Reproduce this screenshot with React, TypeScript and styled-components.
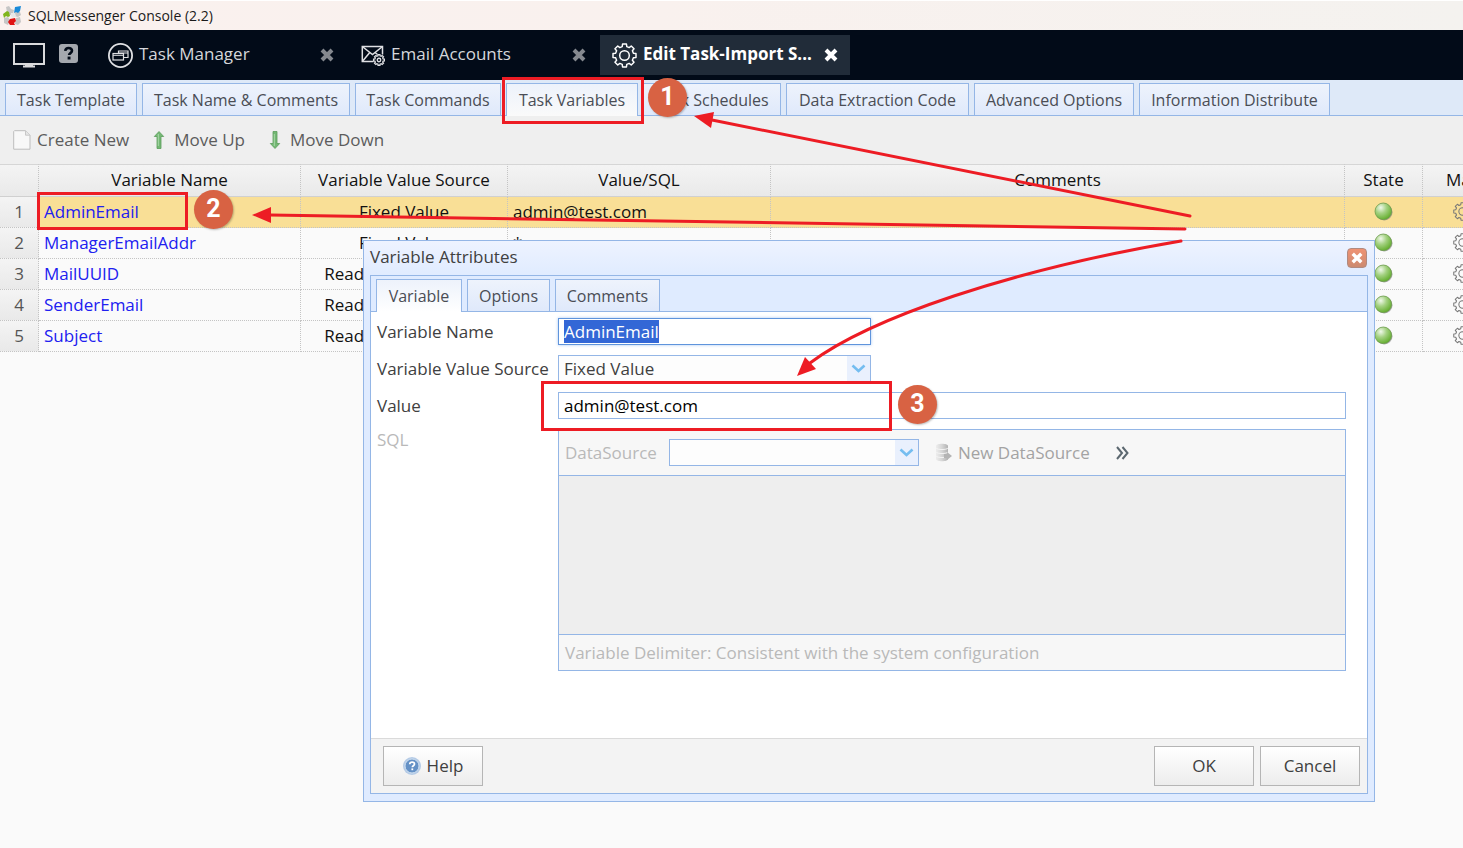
import React, { useEffect, useRef } from "react";
import styled, { createGlobalStyle, css } from "styled-components";

const line = "#94b6e6";
const red = "#ed1c24";

const GlobalStyle = createGlobalStyle`
  *, *::before, *::after { box-sizing: border-box; }
  html, body, #root { height: 100%; }
  body {
    margin: 0;
    background: #fafafa;
    color: #404040;
    font-family: "Open Sans", "Noto Sans", sans-serif;
    font-size: 17px;
    line-height: 24px;
    overflow: hidden;
  }
  button, input, select, textarea { font: inherit; color: inherit; }
  button { cursor: pointer; }
`;

const Page = styled.div`
  position: relative;
  display: flex;
  flex-direction: column;
  min-height: 100%;
  overflow: hidden;
`;

/* ---------- window chrome ---------- */

const TitleBar = styled.header`
  display: flex;
  align-items: center;
  gap: 6px;
  height: 30px;
  padding-left: 3px;
  border-top: 1px solid #fff;
  background: linear-gradient(90deg, #faf1ee, #f9f1ee 45%, #f4f2ef);
  color: #1a1a1a;
  font-size: 14px;
`;

const AppBar = styled.nav`
  display: flex;
  align-items: center;
  gap: 2px;
  height: 50px;
  background: #020b18;
  color: #d8dade;
`;

const Launchers = styled.div`
  display: flex;
  align-items: center;
  gap: 14px;
  width: 94px;
  padding-left: 13px;
`;

const IconButton = styled.button`
  display: flex;
  padding: 0;
  border: 0;
  background: none;
`;

const AppTab = styled.div<{ $active?: boolean }>`
  display: flex;
  align-items: center;
  gap: 6px;
  width: 250px;
  height: 40px;
  padding: 0 12px;
  background: ${(p) => (p.$active ? "#212c39" : "transparent")};
  color: ${(p) => (p.$active ? "#fff" : "#d5d7db")};
  font-weight: ${(p) => (p.$active ? 700 : 400)};
`;

const AppTabLink = styled.a`
  flex: 1;
  padding-bottom: 2px;
  color: inherit;
  text-decoration: none;
  white-space: nowrap;
`;

/* ---------- section tabs ---------- */

const TabStrip = styled.div<{ $inset?: boolean }>`
  display: flex;
  align-items: flex-end;
  gap: 5px;
  height: 36px;
  padding-left: 5px;
  border-bottom: 1px solid ${line};
  background: ${(p) => (p.$inset ? "#dfebff" : "#dee9f8")};
`;

const Tab = styled.button<{ $w: number; $active?: boolean; $fill?: string }>`
  width: ${(p) => p.$w}px;
  height: 32px;
  padding: 0;
  border: 1px solid ${line};
  border-bottom: 0;
  background: linear-gradient(#eef3fc, #dfe9fb);
  color: #4a4d55;
  font-size: 16px;
  white-space: nowrap;
  ${(p) =>
    p.$active &&
    css`
      height: 33px;
      margin-bottom: -1px;
      background: linear-gradient(#edf2fb, ${p.$fill});
    `}
`;

/* ---------- toolbar ---------- */

const Toolbar = styled.div`
  display: flex;
  align-items: center;
  gap: 21px;
  height: 48px;
  padding-left: 13px;
  background: #efefef;
`;

const ToolButton = styled.button<{ $disabled?: boolean }>`
  display: flex;
  align-items: center;
  gap: 6px;
  padding: 0;
  border: 0;
  background: none;
  color: ${(p) => (p.$disabled ? "#a3a3a3" : "#5c5c5c")};
`;

/* ---------- variables grid ---------- */

const GridFrame = styled.main`
  overflow: hidden;
`;

const Grid = styled.table`
  width: calc(100% + 40px);
  table-layout: fixed;
  border-collapse: separate;
  border-spacing: 0;
  color: #111;
`;

const HeadCell = styled.th<{ $left?: boolean }>`
  height: 33px;
  padding: 0 6px 2px ${(p) => (p.$left ? "23px" : "6px")};
  border-top: 1px solid #d6d6d6;
  border-bottom: 1px solid #d0d0d0;
  border-right: 1px dotted #c4c4c4;
  background: linear-gradient(#f4f4f4, #e9e9e9);
  font-weight: 400;
  text-align: ${(p) => (p.$left ? "left" : "center")};
  white-space: nowrap;
  overflow: hidden;
`;

const Row = styled.tr<{ $selected?: boolean }>`
  background: ${(p) => (p.$selected ? "#f9df96" : "#fafafa")};
`;

const Cell = styled.td<{ $align?: string }>`
  height: 31px;
  padding: 0 5px 1px;
  border-right: 1px dotted #c4c4c4;
  border-bottom: 1px dotted #c4c4c4;
  text-align: ${(p) => p.$align ?? "left"};
  line-height: 20px;
  white-space: nowrap;
  svg { display: block; margin: 0 auto; }
`;

const NumberCell = styled(Cell)`
  padding: 0;
  background: linear-gradient(#f4f4f4, #e9e9e9);
  color: #555;
`;

const VariableLink = styled.a`
  color: #2020f0;
  text-decoration: none;
`;

/* ---------- dialog ---------- */

const Dialog = styled.section`
  position: absolute;
  top: 240px;
  left: 363px;
  right: 88px;
  display: flex;
  flex-direction: column;
  padding: 0 6px 7px;
  border: 1px solid ${line};
  background: linear-gradient(#eef3ff, #dfebff 36px);
`;

const DialogHeader = styled.div`
  display: flex;
  align-items: center;
  justify-content: space-between;
  height: 34px;
`;

const DialogTitle = styled.h2`
  margin: 0;
  padding-bottom: 2px;
  font-size: 17px;
  font-weight: 400;
`;

const CloseButton = styled.button`
  display: flex;
  align-items: center;
  justify-content: center;
  width: 20px;
  height: 20px;
  margin-right: 1px;
  padding: 0;
  border: 1px solid #b08a80;
  border-radius: 4px;
  background: linear-gradient(#ef9273, #cc8a70);
`;

const DialogBody = styled.div`
  border: 1px solid ${line};
  background: #fff;
`;

const Form = styled.form`
  display: grid;
  grid-template-columns: 181px 1fr;
  row-gap: 10px;
  height: 426px;
  align-content: start;
  padding: 6px 21px 0 6px;
`;

const Label = styled.label<{ $disabled?: boolean }>`
  line-height: 27px;
  white-space: nowrap;
  color: ${(p) => (p.$disabled ? "#b9b9b9" : "#404040")};
`;

const SqlLabel = styled(Label)`
  line-height: 21px;
`;

const TextField = styled.input<{ $short?: boolean }>`
  width: ${(p) => (p.$short ? "313px" : "100%")};
  height: 27px;
  padding: 0 5px;
  border: 1px solid ${line};
  border-radius: 0;
  background: #fff;
  color: #000;
  outline: none;
  &:focus {
    border-color: #5f94dc;
    box-shadow: 0 0 3px #a9c8f2;
  }
  &::selection { background: #3367d6; color: #fff; }
`;

const SelectBox = styled.div<{ $w: number }>`
  position: relative;
  width: ${(p) => p.$w}px;
  height: 27px;
  svg {
    position: absolute;
    top: 1px;
    right: 1px;
    pointer-events: none;
  }
`;

const Select = styled.select`
  width: 100%;
  height: 100%;
  padding: 0 24px 0 5px;
  border: 1px solid ${line};
  border-radius: 0;
  background: #fdfdfd;
  appearance: none;
  opacity: 1;
`;

const SqlPanel = styled.div`
  border: 1px solid ${line};
  background: #f7f7f7;
`;

const SqlTools = styled.div`
  display: flex;
  align-items: center;
  height: 45px;
  padding-left: 6px;
  gap: 12px;
`;

const SqlToolGroup = styled.div`
  display: flex;
  align-items: center;
  gap: 26px;
  padding-left: 4px;
`;

const SqlText = styled.textarea`
  display: block;
  width: 100%;
  height: 160px;
  padding: 4px;
  border: 1px solid ${line};
  border-width: 1px 0;
  border-radius: 0;
  background: #eee;
  resize: none;
`;

const SqlNote = styled.p`
  margin: 0;
  padding: 0 6px;
  line-height: 35px;
  color: #b9b9b9;
`;

const DialogFooter = styled.div`
  display: flex;
  align-items: center;
  gap: 6px;
  height: 55px;
  padding: 0 7px 0 12px;
  border-top: 1px solid #dadada;
  background: #f3f3f3;
`;

const PushButton = styled.button<{ $first?: boolean }>`
  display: flex;
  align-items: center;
  justify-content: center;
  gap: 6px;
  width: 100px;
  height: 40px;
  padding: 0;
  margin-right: ${(p) => (p.$first ? "auto" : "0")};
  border: 1px solid #b5b5b5;
  background: linear-gradient(#fff, #ececec);
`;

/* ---------- tutorial marks ---------- */

const Frame = styled.div<{ $x: number; $y: number; $w: number; $h: number }>`
  position: absolute;
  left: ${(p) => p.$x}px;
  top: ${(p) => p.$y}px;
  width: ${(p) => p.$w}px;
  height: ${(p) => p.$h}px;
  border: 3px solid ${red};
  pointer-events: none;
`;

const Badge = styled.span<{ $x: number; $y: number }>`
  position: absolute;
  left: ${(p) => p.$x}px;
  top: ${(p) => p.$y}px;
  width: 39px;
  height: 39px;
  border-radius: 50%;
  background: #d86243;
  box-shadow: 1px 1px 2px rgba(0, 0, 0, 0.25);
  color: #fff;
  font: 700 25px/38px Roboto, sans-serif;
  text-align: center;
  pointer-events: none;
`;

const Arrows = styled.svg`
  position: absolute;
  top: 0;
  left: 0;
  pointer-events: none;
`;

/* ---------- icons ---------- */

function gearPath(cx: number, cy: number, outer: number, inner: number) {
  const pts: string[] = [];
  for (let i = 0; i < 8; i++) {
    const base = (i * Math.PI) / 4 - Math.PI / 2;
    [
      [-0.25, inner],
      [-0.17, outer],
      [0.17, outer],
      [0.25, inner],
    ].forEach(([da, r]) => {
      const a = base + da;
      pts.push(`${(cx + r * Math.cos(a)).toFixed(2)} ${(cy + r * Math.sin(a)).toFixed(2)}`);
    });
  }
  return `M${pts.join("L")}Z`;
}

const GearIcon = ({ size, color, sw }: { size: number; color: string; sw: number }) => (
  <svg width={size} height={size} viewBox="0 0 24 24" fill="none" stroke={color} strokeWidth={sw} strokeLinejoin="round">
    <path d={gearPath(12, 12, 11.2, 8.8)} />
    <circle cx="12" cy="12" r="4.6" />
  </svg>
);

const LogoIcon = () => (
  <svg width="19" height="20" viewBox="0 0 19 20">
    <g fill="#c6c6c6">
      <path d="M3 1l3-1 2 3 3 1-1 4-3 1-3-3z" />
      <path d="M12 5l5 1 1 3-3 2-4-1z" />
      <path d="M1 12l4-1 2 3-2 5-4-2z" />
      <path d="M13 12l4-1 1 5-3 3-3-1z" />
    </g>
    <path d="M12 1l6-1-1 5-2 2-2-1-2 1z" fill="#1b8ad8" />
    <path d="M0 8l4-3 2 1 1 4-2 1-2-1-2 2z" fill="#7fb51c" />
    <path d="M7 13l5-1 1 3-2 2 1 2-5 0-2-3z" fill="#e01414" />
    <path d="M8 7l4 0 1 3-3 2-2-2z" fill="#e8e8e8" />
  </svg>
);

const MonitorIcon = () => (
  <svg width="32" height="26" viewBox="0 0 32 26">
    <rect x="1" y="2" width="30" height="20" fill="none" stroke="#d9dadc" strokeWidth="2" />
    <path d="M12 22h8v1.500h2v2H10v-2h2z" fill="#d9dadc" />
  </svg>
);

const HelpSquareIcon = () => (
  <svg width="19" height="22" viewBox="0 0 19 22">
    <rect width="19" height="19" rx="3" fill="#a4a8ae" />
    <path d="M6.200 6.900c.3-2 1.500-2.900 3.400-2.900 2 0 3.400 1.100 3.400 2.800 0 2.300-2.900 2.200-2.900 4.200" fill="none" stroke="#020b18" strokeWidth="2.600" />
    <rect x="8.600" y="12.600" width="2.900" height="2.900" fill="#020b18" />
  </svg>
);

const TaskIcon = () => (
  <svg width="25" height="25" viewBox="0 0 25 25" fill="none" stroke="#dfe0e3">
    <circle cx="12.500" cy="12.500" r="11.600" strokeWidth="1.800" />
    <path d="M10.500 10.500V8h9.500v6.500h-4.500M10.500 10h9.500" strokeWidth="1.200" />
    <rect x="5" y="10.500" width="10.500" height="6.500" strokeWidth="1.200" />
    <path d="M5 12.300h10.500" strokeWidth="1" />
  </svg>
);

const MailIcon = () => (
  <svg width="25" height="22" viewBox="-1 0 24 22" fill="none" stroke="#dfe0e3" strokeWidth="1.500">
    <path d="M12 17.500H.8V2.500H21v8" />
    <path d="M.8 2.500l10.200 8L21 2.500M.8 17.500l7.500-9M13.500 8.500l2.500 2" />
    <g transform="translate(11.500 10) scale(.5)" strokeWidth="2.600">
      <path d={gearPath(12, 12, 11, 8.5)} fill="#020b18" />
      <circle cx="12" cy="12" r="3.500" />
    </g>
  </svg>
);

const CrossIcon = ({ color, size = 14 }: { color: string; size?: number }) => (
  <svg width={size} height={size} viewBox="0 0 14 14">
    <path d="M2 2l10 10M12 2l-10 10" stroke={color} strokeWidth="4" />
  </svg>
);

const PageIcon = () => (
  <svg width="18" height="20" viewBox="0 0 18 20">
    <path d="M1.500 .7h11l4.500 4.500v14H.7V1.500z" fill="#f8f8f8" stroke="#bdbdbd" />
    <path d="M12.500 .7v4.500H17" fill="#e6e6e6" stroke="#c8c8c8" />
  </svg>
);

const ArrowIcon = ({ down }: { down?: boolean }) => (
  <svg width="18" height="18" viewBox="-3 0 18 18">
    <path
      d={down ? "M4 .5h4v12h2.700L6 17.500 1.300 12.500H4z" : "M4 17.500h4v-12h2.700L6 .5 1.300 5.500H4z"}
      fill="#74b874"
      stroke="#5b9d5b"
      strokeWidth=".8"
    />
    <path d="M5.300 3v12" stroke="#a9d8a9" />
  </svg>
);

const BallIcon = () => (
  <svg width="19" height="19" viewBox="0 0 19 19">
    <defs>
      <radialGradient id="ball" cx=".35" cy=".28" r=".75">
        <stop offset="0" stopColor="#f0f8ea" />
        <stop offset=".45" stopColor="#a5d283" />
        <stop offset="1" stopColor="#62ad2c" />
      </radialGradient>
    </defs>
    <circle cx="10.300" cy="10.300" r="8.200" fill="#777" opacity=".6" />
    <circle cx="9.300" cy="9.300" r="8.300" fill="url(#ball)" stroke="#6c9a4c" strokeWidth=".8" />
  </svg>
);

const Chevron = () => (
  <svg width="23" height="25" viewBox="0 0 23 25">
    <rect width="23" height="25" fill="#e9f0fd" />
    <path d="M5.500 9.500l6 5.500 6-5.500" fill="none" stroke="#74bdf0" strokeWidth="2.600" />
  </svg>
);

const DatabaseIcon = () => (
  <svg width="17" height="19" viewBox="0 0 17 19">
    <defs>
      <linearGradient id="drum">
        <stop offset="0" stopColor="#ededed" />
        <stop offset=".5" stopColor="#d6d6d6" />
        <stop offset="1" stopColor="#b2b2b2" />
      </linearGradient>
    </defs>
    <path d="M1 3c0-3 12-3 12 0v13c0 3-12 3-12 0z" fill="url(#drum)" />
    <path d="M1 5c1 2 11 2 12 0M1 9c1 2 11 2 12 0M1 13c1 2 11 2 12 0" fill="none" stroke="#f4f4f4" />
    <path d="M9 11h3V9l5 4-5 4v-2H9z" fill="#b4b4b4" />
  </svg>
);

const MoreIcon = () => (
  <svg width="13" height="14" viewBox="0 0 13 14" fill="none" stroke="#5c6870" strokeWidth="2">
    <path d="M1 1l5 6-5 6M6.500 1l5 6-5 6" />
  </svg>
);

const HelpIcon = () => (
  <svg width="18" height="18" viewBox="0 0 18 18">
    <circle cx="9" cy="9" r="9" fill="#b5cbe6" />
    <circle cx="9" cy="9" r="7" fill="#6491c6" stroke="#cfdff0" />
    <path d="M6.700 7.300c.1-1.500 1-2.200 2.400-2.200s2.400.8 2.400 2c0 1.600-2.200 1.700-2.200 3.200" fill="none" stroke="#fff" strokeWidth="1.700" />
    <rect x="8.400" y="11.400" width="1.800" height="1.800" fill="#fff" />
  </svg>
);

/* ---------- data ---------- */

const sectionTabs = [
  { text: "Task Template", w: 132 },
  { text: "Task Name & Comments", w: 208 },
  { text: "Task Commands", w: 146 },
  { text: "Task Variables", w: 132, active: true },
  { text: "Task Schedules", w: 138 },
  { text: "Data Extraction Code", w: 183 },
  { text: "Advanced Options", w: 160 },
  { text: "Information Distribute", w: 191 },
];

const variables = [
  { name: "AdminEmail", source: "Fixed Value", value: "admin@test.com" },
  { name: "ManagerEmailAddr", source: "Fixed Value", value: "*" },
  { name: "MailUUID", source: "Read From Message", value: "" },
  { name: "SenderEmail", source: "Read From Message", value: "" },
  { name: "Subject", source: "Read From Message", value: "" },
];

export default function App() {
  const nameRef = useRef<HTMLInputElement>(null);
  useEffect(() => {
    nameRef.current?.focus();
    nameRef.current?.select();
  }, []);

  return (
    <Page>
      <GlobalStyle />
      <TitleBar>
        <LogoIcon />
        SQLMessenger Console (2.2)
      </TitleBar>

      <AppBar>
        <Launchers>
          <IconButton aria-label="Desktop"><MonitorIcon /></IconButton>
          <IconButton aria-label="Help"><HelpSquareIcon /></IconButton>
        </Launchers>
        <AppTab>
          <TaskIcon />
          <AppTabLink href="#tasks">Task Manager</AppTabLink>
          <IconButton aria-label="Close Task Manager"><CrossIcon color="#85898f" /></IconButton>
        </AppTab>
        <AppTab>
          <MailIcon />
          <AppTabLink href="#accounts">Email Accounts</AppTabLink>
          <IconButton aria-label="Close Email Accounts"><CrossIcon color="#85898f" /></IconButton>
        </AppTab>
        <AppTab $active>
          <GearIcon size={25} color="#fff" sw={1.4} />
          <AppTabLink href="#edit">Edit Task-Import S...</AppTabLink>
          <IconButton aria-label="Close Edit Task"><CrossIcon color="#fff" /></IconButton>
        </AppTab>
      </AppBar>

      <TabStrip>
        {sectionTabs.map((t) => (
          <Tab key={t.text} $w={t.w} $active={t.active} $fill="#fafafa">{t.text}</Tab>
        ))}
      </TabStrip>

      <Toolbar>
        <ToolButton><PageIcon />Create New</ToolButton>
        <ToolButton><ArrowIcon />Move Up</ToolButton>
        <ToolButton><ArrowIcon down />Move Down</ToolButton>
      </Toolbar>

      <GridFrame>
        <Grid>
          <colgroup>
            <col width="39" />
            <col width="262" />
            <col width="207" />
            <col width="263" />
            <col />
            <col width="78" />
            <col width="80" />
          </colgroup>
          <thead>
            <tr>
              <HeadCell />
              <HeadCell>Variable Name</HeadCell>
              <HeadCell>Variable Value Source</HeadCell>
              <HeadCell>Value/SQL</HeadCell>
              <HeadCell>Comments</HeadCell>
              <HeadCell>State</HeadCell>
              <HeadCell $left>Ma</HeadCell>
            </tr>
          </thead>
          <tbody>
            {variables.map((v, i) => (
              <Row key={v.name} $selected={i === 0}>
                <NumberCell $align="center">{i + 1}</NumberCell>
                <Cell><VariableLink href={`#${v.name}`}>{v.name}</VariableLink></Cell>
                <Cell $align="center">{v.source}</Cell>
                <Cell>{v.value}</Cell>
                <Cell />
                <Cell><BallIcon /></Cell>
                <Cell><GearIcon size={19} color="#777" sw={1.3} /></Cell>
              </Row>
            ))}
          </tbody>
        </Grid>
      </GridFrame>

      <Dialog role="dialog" aria-labelledby="dialog-title">
        <DialogHeader>
          <DialogTitle id="dialog-title">Variable Attributes</DialogTitle>
          <CloseButton aria-label="Close"><CrossIcon color="#fff" size={12} /></CloseButton>
        </DialogHeader>
        <DialogBody>
          <TabStrip $inset>
            <Tab $w={86} $active $fill="#fff">Variable</Tab>
            <Tab $w={83}>Options</Tab>
            <Tab $w={105}>Comments</Tab>
          </TabStrip>
          <Form onSubmit={(e) => e.preventDefault()}>
            <Label htmlFor="var-name">Variable Name</Label>
            <TextField id="var-name" ref={nameRef} $short defaultValue="AdminEmail" />
            <Label htmlFor="var-source">Variable Value Source</Label>
            <SelectBox $w={313}>
              <Select id="var-source"><option>Fixed Value</option></Select>
              <Chevron />
            </SelectBox>
            <Label htmlFor="var-value">Value</Label>
            <TextField id="var-value" defaultValue="admin@test.com" />
            <SqlLabel htmlFor="var-sql" $disabled>SQL</SqlLabel>
            <SqlPanel>
              <SqlTools>
                <Label htmlFor="data-source" $disabled>DataSource</Label>
                <SelectBox $w={250}>
                  <Select id="data-source" disabled />
                  <Chevron />
                </SelectBox>
                <SqlToolGroup>
                  <ToolButton type="button" $disabled><DatabaseIcon />New DataSource</ToolButton>
                  <IconButton type="button" aria-label="More"><MoreIcon /></IconButton>
                </SqlToolGroup>
              </SqlTools>
              <SqlText id="var-sql" disabled />
              <SqlNote>Variable Delimiter: Consistent with the system configuration</SqlNote>
            </SqlPanel>
          </Form>
          <DialogFooter>
            <PushButton $first><HelpIcon />Help</PushButton>
            <PushButton>OK</PushButton>
            <PushButton>Cancel</PushButton>
          </DialogFooter>
        </DialogBody>
      </Dialog>

      <Frame $x={502} $y={77} $w={142} $h={47} />
      <Frame $x={37} $y={192} $w={151} $h={38} />
      <Frame $x={541} $y={381} $w={351} $h={50} />

      <Arrows width="1200" height="400" viewBox="0 0 1200 400" fill="none" stroke={red} strokeWidth="3" strokeLinecap="round">
        <path d="M1190 216L712 120" />
        <path d="M1185 229L270 215" />
        <path d="M1181 241C1010 270 870 318 810 363" />
        <g fill={red} stroke="none">
          <path d="M694 116l20-4-3 16z" />
          <path d="M252 215l19-8v16z" />
          <path d="M797 376l8-19 11 12z" />
        </g>
      </Arrows>

      <Badge $x={648} $y={78}>1</Badge>
      <Badge $x={194} $y={190}>2</Badge>
      <Badge $x={898} $y={385}>3</Badge>
    </Page>
  );
}
